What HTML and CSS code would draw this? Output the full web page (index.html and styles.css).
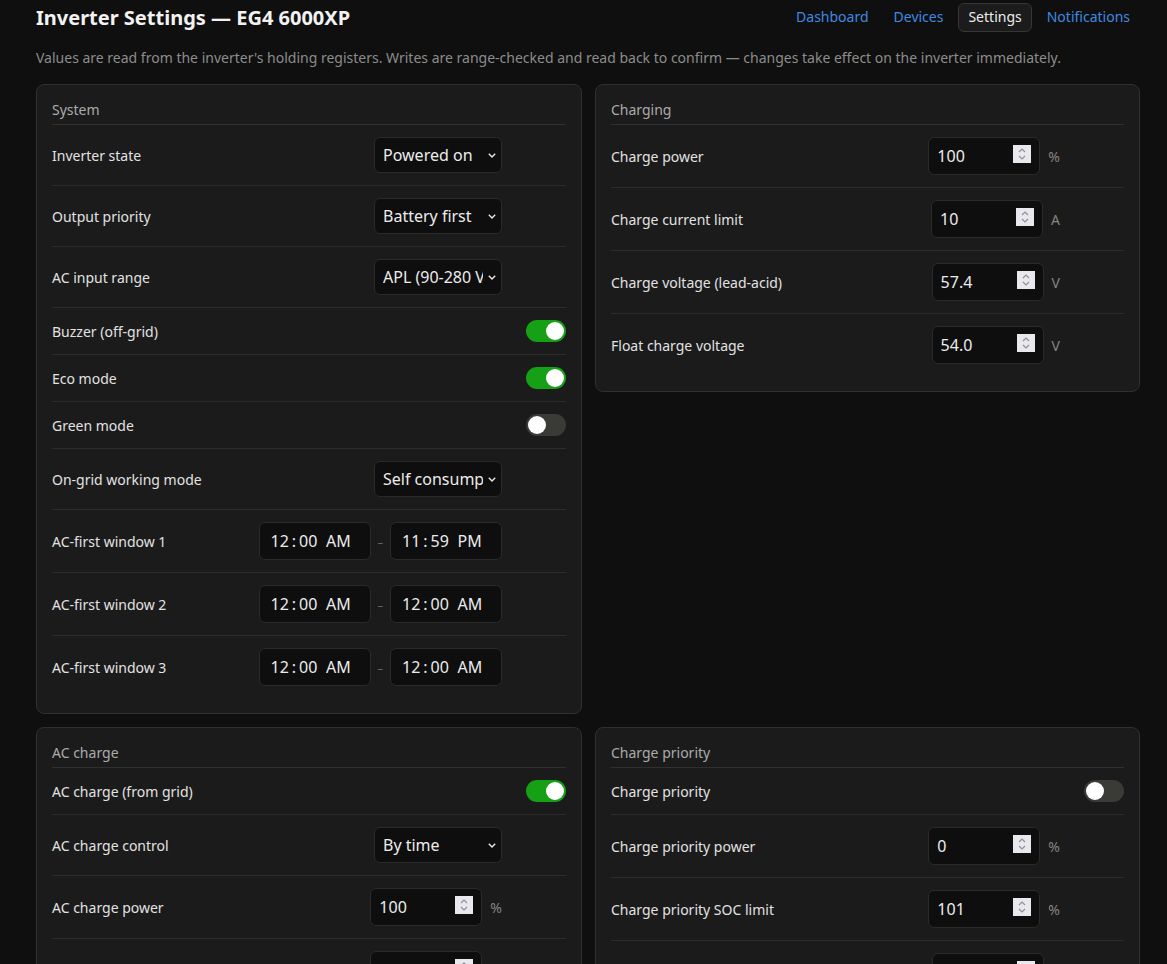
FILE: index.html
```html
<!DOCTYPE html>
<html lang="en">
<head>
    <meta charset="UTF-8">
    <meta name="viewport" content="width=device-width, initial-scale=1.0">
    <title>Inverter Settings</title>
    <link rel="stylesheet" href="styles.css">
</head>
<body>
    <header class="topbar">
        <h1 class="title">Inverter Settings — EG4 6000XP</h1>
        <nav class="nav">
            <a href="#">Dashboard</a>
            <a href="#">Devices</a>
            <a href="#" class="active">Settings</a>
            <a href="#">Notifications</a>
        </nav>
    </header>

    <p class="intro">Values are read from the inverter's holding registers. Writes are range-checked and read back to confirm — changes take effect on the inverter immediately.</p>

    <main class="grid">
        <!-- System -->
        <section class="card">
            <h2 class="card-title">System</h2>
            <div class="row">
                <span class="label">Inverter state</span>
                <div class="ctl"><select class="select"><option>Powered on</option><option>Standby</option></select></div>
            </div>
            <div class="row">
                <span class="label">Output priority</span>
                <div class="ctl"><select class="select"><option>Battery first</option><option>Solar first</option><option>Grid first</option></select></div>
            </div>
            <div class="row">
                <span class="label">AC input range</span>
                <div class="ctl"><select class="select"><option>APL (90-280 V)</option><option>UPS (170-280 V)</option></select></div>
            </div>
            <div class="row">
                <span class="label">Buzzer (off-grid)</span>
                <span class="toggle on"></span>
            </div>
            <div class="row">
                <span class="label">Eco mode</span>
                <span class="toggle on"></span>
            </div>
            <div class="row">
                <span class="label">Green mode</span>
                <span class="toggle"></span>
            </div>
            <div class="row">
                <span class="label">On-grid working mode</span>
                <div class="ctl"><select class="select"><option>Self consumption</option><option>Zero export</option></select></div>
            </div>
            <div class="row">
                <span class="label">AC-first window 1</span>
                <div class="ctl">
                    <input class="time" type="time" value="00:00">
                    <span class="dash">–</span>
                    <input class="time" type="time" value="23:59">
                </div>
            </div>
            <div class="row">
                <span class="label">AC-first window 2</span>
                <div class="ctl">
                    <input class="time" type="time" value="00:00">
                    <span class="dash">–</span>
                    <input class="time" type="time" value="00:00">
                </div>
            </div>
            <div class="row">
                <span class="label">AC-first window 3</span>
                <div class="ctl">
                    <input class="time" type="time" value="00:00">
                    <span class="dash">–</span>
                    <input class="time" type="time" value="00:00">
                </div>
            </div>
        </section>

        <!-- Charging -->
        <section class="card">
            <h2 class="card-title">Charging</h2>
            <div class="row">
                <span class="label">Charge power</span>
                <div class="ctl"><input class="num" type="number" value="100"><span class="unit">%</span></div>
            </div>
            <div class="row">
                <span class="label">Charge current limit</span>
                <div class="ctl"><input class="num" type="number" value="10"><span class="unit">A</span></div>
            </div>
            <div class="row">
                <span class="label">Charge voltage (lead-acid)</span>
                <div class="ctl"><input class="num" type="number" step="0.1" value="57.4"><span class="unit">V</span></div>
            </div>
            <div class="row">
                <span class="label">Float charge voltage</span>
                <div class="ctl"><input class="num" type="number" step="0.1" value="54.0"><span class="unit">V</span></div>
            </div>
        </section>

        <!-- AC charge -->
        <section class="card">
            <h2 class="card-title">AC charge</h2>
            <div class="row">
                <span class="label">AC charge (from grid)</span>
                <span class="toggle on"></span>
            </div>
            <div class="row">
                <span class="label">AC charge control</span>
                <div class="ctl"><select class="select"><option>By time</option><option>By SOC</option><option>By voltage</option></select></div>
            </div>
            <div class="row">
                <span class="label">AC charge power</span>
                <div class="ctl"><input class="num" type="number" value="100"><span class="unit">%</span></div>
            </div>
            <div class="row">
                <span class="label">AC charge SOC limit</span>
                <div class="ctl"><input class="num" type="number" value="100"><span class="unit">%</span></div>
            </div>
            <div class="row">
                <span class="label">AC charge window 1</span>
                <div class="ctl">
                    <input class="time" type="time" value="00:00">
                    <span class="dash">–</span>
                    <input class="time" type="time" value="06:00">
                </div>
            </div>
        </section>

        <!-- Charge priority -->
        <section class="card">
            <h2 class="card-title">Charge priority</h2>
            <div class="row">
                <span class="label">Charge priority</span>
                <span class="toggle"></span>
            </div>
            <div class="row">
                <span class="label">Charge priority power</span>
                <div class="ctl"><input class="num" type="number" value="0"><span class="unit">%</span></div>
            </div>
            <div class="row">
                <span class="label">Charge priority SOC limit</span>
                <div class="ctl"><input class="num" type="number" value="101"><span class="unit">%</span></div>
            </div>
            <div class="row">
                <span class="label">Charge priority voltage limit</span>
                <div class="ctl"><input class="num" type="number" step="0.1" value="56.0"><span class="unit">V</span></div>
            </div>
        </section>
    </main>
</body>
</html>
```

FILE: styles.css
```css
body {
    font-family: "Noto Sans", "DejaVu Sans", sans-serif;
    background-color: #0f0f0f;
    color: #e4e4e4;
    margin: 0;
    padding: 3px 27px 40px 36px;
}
.topbar {
    display: flex;
    align-items: center;
    justify-content: space-between;
}
.title {
    margin: 0;
    font-size: 20px;
    line-height: 28px;
    font-weight: 700;
    color: #f2f2f2;
}
.nav {
    display: flex;
    gap: 5px;
}
.nav a {
    font-size: 14px;
    line-height: 20px;
    padding: 3px 9px 4px;
    color: #3f8ae0;
    text-decoration: none;
    border: 1px solid transparent;
    border-radius: 6px;
}
.nav a.active {
    color: #ececec;
    background-color: #1c1c1c;
    border-color: #363636;
}
.intro {
    margin: 16px 0 16px;
    font-size: 14px;
    line-height: 20px;
    color: #8c8c8c;
}
.grid {
    display: grid;
    grid-template-columns: 546px 1fr;
    gap: 13px;
    align-items: start;
}
.card {
    background-color: #1b1b1b;
    border: 1px solid #2f2f2f;
    border-radius: 8px;
    padding: 15px;
}
.card-title {
    margin: 0;
    font-size: 14px;
    line-height: 20px;
    font-weight: 400;
    color: #ababab;
    padding: 0 0 4px;
    border-bottom: 1px solid #303030;
}
.row {
    display: flex;
    align-items: center;
    justify-content: space-between;
    padding: 12px 0;
    border-bottom: 1px solid #2c2c2c;
}
.row:last-child {
    border-bottom: none;
}
.label {
    font-size: 14px;
    color: #e2e2e2;
}
.ctl {
    display: flex;
    align-items: center;
    gap: 8px;
    margin-right: 64px;
}
.select, .num, .time {
    font-family: inherit;
    font-size: 16px;
    color: #ececec;
    background-color: #0e0e0e;
    border: 1px solid #2a2a2a;
    border-radius: 6px;
    box-sizing: border-box;
}
/* small thin chevron instead of the native arrow */
.select {
    appearance: none;
    width: 128px;
    height: 36px;
    padding: 0 18px 0 8px;
    background-image: url("data:image/svg+xml,%3Csvg xmlns='http://www.w3.org/2000/svg' width='8' height='5' viewBox='0 0 8 5'%3E%3Cpath d='M0.8 0.8 L4 4 L7.2 0.8' fill='none' stroke='%23e8e8e8' stroke-width='1.4'/%3E%3C/svg%3E");
    background-repeat: no-repeat;
    background-position: right 5px center;
    background-size: 8px 5px;
}
.num {
    width: 112px;
    height: 38px;
    padding: 0 8px 0 8px;
}
/* light stepper box with up/down chevrons */
.num::-webkit-inner-spin-button {
    -webkit-appearance: none;
    appearance: none;
    opacity: 1;
    width: 18px;
    height: 18px;
    margin-left: 4px;
    background-color: #e8e8ee;
    background-image: url("data:image/svg+xml,%3Csvg xmlns='http://www.w3.org/2000/svg' width='18' height='18' viewBox='0 0 18 18'%3E%3Cpath d='M6 7 L9 4 L12 7 M6 11 L9 14 L12 11' fill='none' stroke='%23909098' stroke-width='1.2'/%3E%3C/svg%3E");
    background-repeat: no-repeat;
    background-position: center;
}
.time {
    width: 112px;
    height: 38px;
    padding: 0 8px 0 10px;
}
.time::-webkit-datetime-edit-text {
    padding: 0 2px;
}
.time::-webkit-calendar-picker-indicator {
    display: none;
}
.unit {
    font-size: 14px;
    color: #858585;
}
.dash {
    color: #6a6a6a;
    font-size: 11px;
    margin: 0 -1px;
}
.toggle {
    position: relative;
    width: 40px;
    height: 22px;
    border-radius: 11px;
    background-color: #3a3a37;
    flex-shrink: 0;
}
.toggle::after {
    content: "";
    position: absolute;
    top: 2px;
    left: 2px;
    width: 18px;
    height: 18px;
    border-radius: 50%;
    background-color: #fff;
}
.toggle.on {
    background-color: #16a016;
}
.toggle.on::after {
    left: 20px;
}
```
